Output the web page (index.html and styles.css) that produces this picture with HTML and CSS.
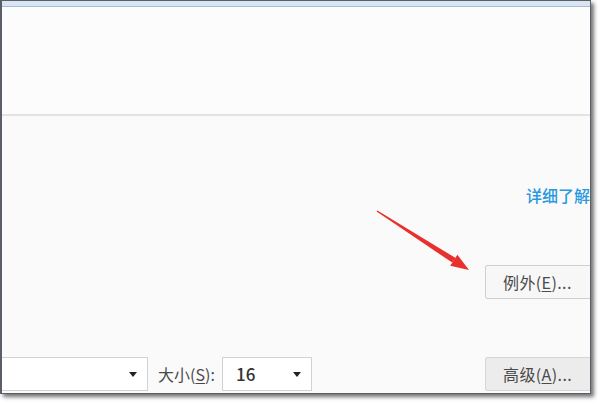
FILE: index.html
```html
<!DOCTYPE html>
<html>
<head>
<meta charset="utf-8">
<link rel="stylesheet" href="styles.css">
</head>
<body>
<div class="frame">
  <div class="band"></div>
  <div class="upper"></div>
  <div class="lower">
    <div class="link-row"><span class="link">详细了解</span></div>
    <div class="btn-row"><div class="btn light">例外(<u>E</u>)...</div></div>
    <div class="bottom-row">
      <div class="select font-select"><span class="caret"></span></div>
      <div class="label">大小(<u>S</u>):</div>
      <div class="select size-select"><span class="val">16</span><span class="caret"></span></div>
      <div class="btn adv">高级(<u>A</u>)...</div>
    </div>
  </div>
  <svg class="arrow" width="591" height="394" viewBox="0 0 591 394">
    <polygon points="376.6,211.5 377.4,210.5 455.6,258.0 452.2,262.6" fill="#e8302c"/>
    <polygon points="469,270 450.2,265.8 457.4,254.8" fill="#e8302c"/>
  </svg>
</div>
</body>
</html>
```
FILE: styles.css
```css
html, body {
  margin: 0;
  padding: 0;
  background: #ffffff;
}
body {
  width: 600px;
  height: 404px;
  overflow: hidden;
  font-family: "Noto Sans CJK SC", "Noto Sans", sans-serif;
}
.frame {
  position: relative;
  width: 588px;
  height: 392px;
  border-left: 2px solid #5a5e66;
  border-top: 1px solid #5a5e66;
  border-right: 1px solid #5a5e66;
  border-bottom: 1px solid #5a5e66;
  box-shadow: 3px 3px 4px rgba(0,0,0,0.55);
  background: #fcfcfc;
  overflow: hidden;
  display: flex;
  flex-direction: column;
}
.band {
  height: 5px;
  background: #d9e5f2;
  border-bottom: 1px solid #a8bcd3;
  flex: none;
}
.upper {
  height: 107px;
  background: #fcfcfc;
  border-bottom: 2px solid #e3e3e3;
  flex: none;
}
.lower {
  flex: 1;
  background: #fafafa;
  display: flex;
  flex-direction: column;
}
.link-row {
  margin-top: 68px;
  padding-left: 524px;
  height: 22px;
  line-height: 22px;
  white-space: nowrap;
}
.link {
  color: #2a98de;
  font-size: 16px;
  font-weight: 500;
}
.btn-row {
  margin-top: 59px;
  padding-left: 483px;
  display: flex;
}
.btn {
  box-sizing: border-box;
  height: 34px;
  width: 110px;
  flex: none;
  border: 1px solid #cfcfcf;
  border-radius: 2px;
  padding-left: 17px;
  font-size: 16px;
  line-height: 32px;
  color: #4a4a4a;
  white-space: nowrap;
  letter-spacing: 0.4px;
}
.btn u, .label u {
  text-underline-offset: 2px;
}
.btn.light {
  background: #f7f7f7;
}
.btn.adv {
  background: #ececec;
  margin-left: 173px;
  border-color: #d6d6d6;
}
.bottom-row {
  margin-top: 58px;
  display: flex;
  align-items: center;
  height: 34px;
}
.select {
  box-sizing: border-box;
  height: 34px;
  border: 1px solid #d2d2d2;
  background: #ffffff;
  position: relative;
  flex: none;
}
.font-select {
  margin-left: -22px;
  width: 168px;
}
.size-select {
  width: 90px;
  margin-left: 4px;
}
.caret {
  position: absolute;
  right: 10px;
  top: 14px;
  width: 0;
  height: 0;
  border-left: 4px solid transparent;
  border-right: 4px solid transparent;
  border-top: 5px solid #222;
}
.val {
  display: block;
  padding-left: 13px;
  font-size: 17px;
  font-weight: 500;
  line-height: 32px;
  color: #333;
}
.label {
  flex: none;
  margin-left: 10px;
  width: 60px;
  font-size: 16px;
  color: #4a4a4a;
  white-space: nowrap;
}
.arrow {
  position: absolute;
  left: -2px;
  top: -1px;
  pointer-events: none;
}
```
